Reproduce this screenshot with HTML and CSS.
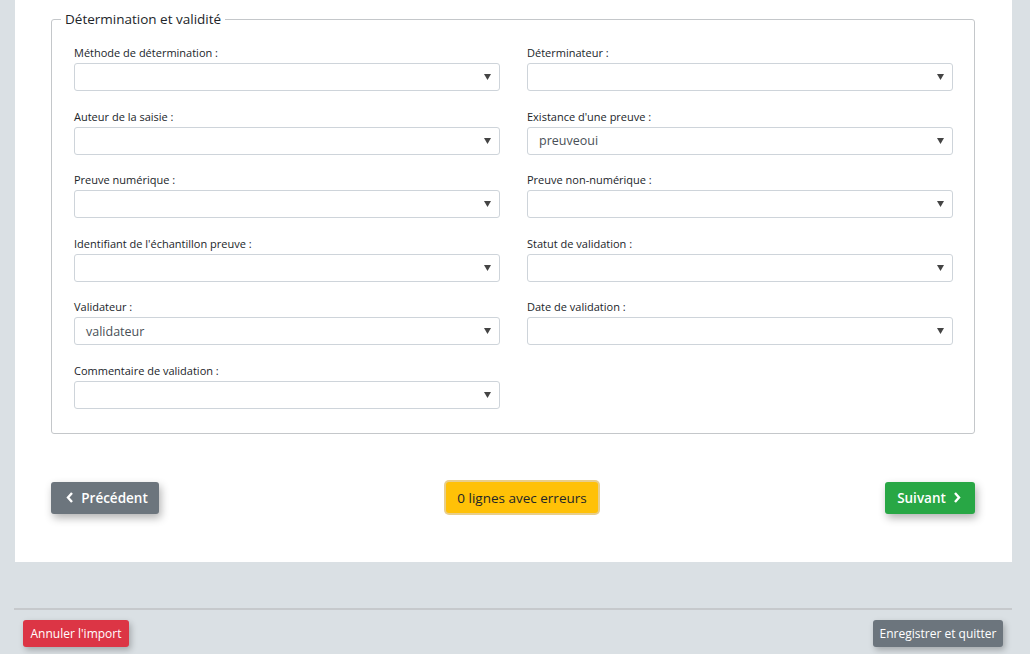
FILE: index.html
```html
<!DOCTYPE html>
<html lang="fr">
<head>
<meta charset="utf-8">
<title>Détermination et validité</title>
<link rel="stylesheet" href="styles.css">
</head>
<body>
<div class="card">
  <fieldset class="group">
    <legend>Détermination et validité</legend>
    <div class="grid">
      <div class="field"><label>Méthode de détermination :</label><div class="select"><span></span><svg class="caret" width="7" height="6" viewBox="0 0 7 6"><path d="M0 0H7L3.5 6Z"/></svg></div></div>
      <div class="field"><label>Déterminateur :</label><div class="select"><span></span><svg class="caret" width="7" height="6" viewBox="0 0 7 6"><path d="M0 0H7L3.5 6Z"/></svg></div></div>
      <div class="field"><label>Auteur de la saisie :</label><div class="select"><span></span><svg class="caret" width="7" height="6" viewBox="0 0 7 6"><path d="M0 0H7L3.5 6Z"/></svg></div></div>
      <div class="field"><label>Existance d'une preuve :</label><div class="select"><span>preuveoui</span><svg class="caret" width="7" height="6" viewBox="0 0 7 6"><path d="M0 0H7L3.5 6Z"/></svg></div></div>
      <div class="field"><label>Preuve numérique :</label><div class="select"><span></span><svg class="caret" width="7" height="6" viewBox="0 0 7 6"><path d="M0 0H7L3.5 6Z"/></svg></div></div>
      <div class="field"><label>Preuve non-numérique :</label><div class="select"><span></span><svg class="caret" width="7" height="6" viewBox="0 0 7 6"><path d="M0 0H7L3.5 6Z"/></svg></div></div>
      <div class="field"><label>Identifiant de l'échantillon preuve :</label><div class="select"><span></span><svg class="caret" width="7" height="6" viewBox="0 0 7 6"><path d="M0 0H7L3.5 6Z"/></svg></div></div>
      <div class="field"><label>Statut de validation :</label><div class="select"><span></span><svg class="caret" width="7" height="6" viewBox="0 0 7 6"><path d="M0 0H7L3.5 6Z"/></svg></div></div>
      <div class="field"><label>Validateur :</label><div class="select"><span>validateur</span><svg class="caret" width="7" height="6" viewBox="0 0 7 6"><path d="M0 0H7L3.5 6Z"/></svg></div></div>
      <div class="field"><label>Date de validation :</label><div class="select"><span></span><svg class="caret" width="7" height="6" viewBox="0 0 7 6"><path d="M0 0H7L3.5 6Z"/></svg></div></div>
      <div class="field"><label>Commentaire de validation :</label><div class="select"><span></span><svg class="caret" width="7" height="6" viewBox="0 0 7 6"><path d="M0 0H7L3.5 6Z"/></svg></div></div>
    </div>
  </fieldset>
  <div class="nav">
    <button class="btn btn-secondary btn-nav btn-prev"><svg class="chev" width="8" height="11" viewBox="0 0 8 11"><path d="M6 1L2 5.5L6 10" fill="none" stroke="#fff" stroke-width="2.4"/></svg>Précédent</button>
    <button class="btn btn-warning">0 lignes avec erreurs</button>
    <button class="btn btn-success btn-nav btn-next">Suivant<svg class="chev" width="8" height="11" viewBox="0 0 8 11"><path d="M2 1L6 5.5L2 10" fill="none" stroke="#fff" stroke-width="2.4"/></svg></button>
  </div>
</div>
<div class="footer">
  <button class="btn btn-sm btn-danger">Annuler l'import</button>
  <button class="btn btn-sm btn-secondary">Enregistrer et quitter</button>
</div>
</body>
</html>
```
FILE: styles.css
```css
* { box-sizing: border-box; }
html, body { margin: 0; padding: 0; }
body {
  background: #dae0e4;
  font-family: "Open Sans", "Noto Sans", sans-serif;
  color: #212529;
  width: 1030px;
  height: 654px;
  overflow: hidden;
}
.card {
  background: #fff;
  margin-left: 15px;
  width: 997px;
  padding: 10px 37px 48px 36px;
}
.group {
  margin: 0;
  border: 1px solid #c4c7ca;
  border-radius: 3px;
  padding: 15px 22px 24px 22px;
  min-width: 0;
}
.group legend {
  font-size: 13.5px;
  line-height: 19px;
  padding: 0 4px;
  margin-left: -13px;
  color: #212529;
}
.grid {
  display: grid;
  grid-template-columns: 426px 426px;
  column-gap: 27px;
  row-gap: 16.5px;
}
.field label {
  display: block;
  font-size: 11px;
  line-height: 18px;
  margin-bottom: 1px;
  color: #212529;
}
.select {
  height: 28px;
  border: 1px solid #ced4da;
  border-radius: 3px;
  display: flex;
  align-items: center;
  justify-content: space-between;
  padding: 0 8px 0 11px;
  font-size: 12.5px;
  color: #495057;
}
.caret { fill: #444; }
.nav {
  display: flex;
  justify-content: space-between;
  align-items: center;
  margin-top: 48px;
}
.btn {
  font-family: inherit;
  border: 0;
  color: #fff;
  border-radius: 3px;
  display: inline-flex;
  align-items: center;
  justify-content: center;
  white-space: nowrap;
  cursor: pointer;
}
.btn-nav {
  height: 32px;
  font-size: 13.5px;
  font-weight: 600;
  gap: 7px;
  box-shadow: 2px 4px 8px rgba(0,0,0,.3);
}
.btn-prev { width: 108px; padding: 0 0 0 4px; }
.btn-next { width: 90px; padding: 0 2px 0 0; }
.btn-secondary { background: #6c757d; }
.btn-success { background: #28a745; }
.btn-danger { background: #dc3545; }
.btn-warning {
  background: #ffc107;
  color: #212529;
  height: 31px;
  width: 152px;
  font-size: 13.5px;
  box-shadow: 0 0 0 2px rgba(224, 190, 100, .75);
}
.footer {
  margin: 46px 18px 0 14px;
  border-top: 2px solid #c6c9cc;
  padding: 10px 9px 0 9px;
  display: flex;
  justify-content: space-between;
}
.btn-sm {
  height: 27px;
  font-size: 12px;
  padding: 0;
  box-shadow: 2px 3px 6px rgba(0,0,0,.25);
}
.footer .btn-danger { width: 106px; }
.footer .btn-secondary { width: 130px; }
```
